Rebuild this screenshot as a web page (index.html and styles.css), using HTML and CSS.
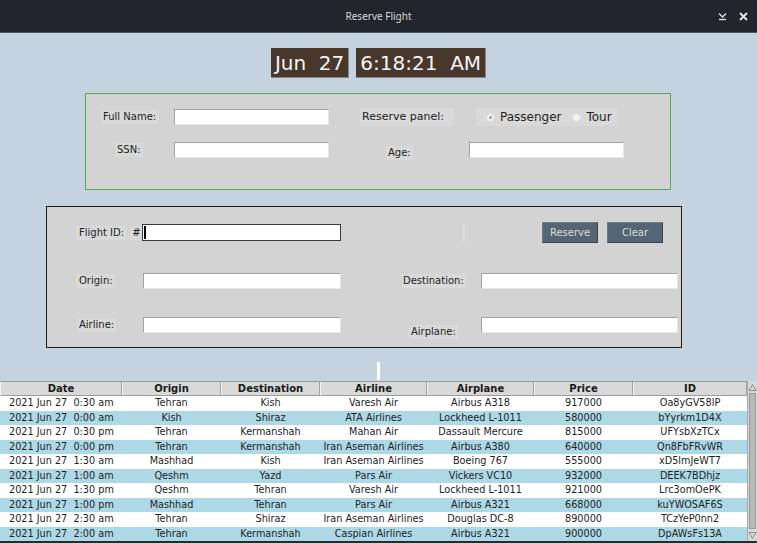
FILE: index.html
```html
<!DOCTYPE html>
<html>
<head>
<meta charset="utf-8">
<title>Reserve Flight</title>
<link rel="stylesheet" href="styles.css">
</head>
<body>
<div class="window">
  <div class="titlebar">
    <span class="title">Reserve Flight</span>
    <div class="wm-buttons">
      <svg class="wm-icon" width="9" height="9" viewBox="0 0 9 9"><path d="M1 1.5 L4.5 5 L8 1.5" fill="none" stroke="#e0e0e0" stroke-width="1.4"/><path d="M1 7.5 H8" stroke="#e0e0e0" stroke-width="1.4"/></svg>
      <svg class="wm-icon" width="9" height="9" viewBox="0 0 9 9"><path d="M1 1 L8 8 M8 1 L1 8" stroke="#e8e8e8" stroke-width="1.8"/></svg>
    </div>
  </div>

  <div class="clock">
    <div class="clock-box">Jun  27</div>
    <div class="clock-box">6:18:21  AM</div>
  </div>

  <div class="panel person">
    <div class="prow r1">
      <div class="cell c-name"><span class="lbl l-full">Full Name:</span></div>
      <div class="entry e-155"></div>
      <span class="lbl big l-reserve">Reserve panel:</span>
      <div class="radios">
        <span class="radio on"></span><span class="rtext">Passenger</span>
        <span class="radio"></span><span class="rtext">Tour</span>
      </div>
    </div>
    <div class="prow r2">
      <div class="cell c-name"><span class="lbl l-ssn">SSN:</span></div>
      <div class="entry e-155"></div>
      <div class="cell c-age"><span class="lbl l-age">Age:</span></div>
      <div class="entry e-155"></div>
    </div>
  </div>

  <div class="panel flight">
    <div class="frow f1">
      <div class="cell c-fid"><span class="lbl l-fid">Flight ID:</span><span class="lbl l-hash">#</span></div>
      <div class="entry focus e-199"><span class="caret"></span></div>
      <span class="ghost"></span>
      <button class="btn b-reserve">Reserve</button>
      <button class="btn b-clear">Clear</button>
    </div>
    <div class="frow f2">
      <div class="cell c-left"><span class="lbl">Origin:</span></div>
      <div class="entry e-198"></div>
      <div class="cell c-mid"><span class="lbl l-dest">Destination:</span></div>
      <div class="entry e-197"></div>
    </div>
    <div class="frow f3">
      <div class="cell c-left"><span class="lbl">Airline:</span></div>
      <div class="entry e-198"></div>
      <div class="cell c-mid"><span class="lbl l-plane">Airplane:</span></div>
      <div class="entry e-197"></div>
    </div>
  </div>

  <div class="marker"></div>

  <div class="tablewrap">
    <div class="grid">
      <div class="trow head">
        <div class="hc">Date</div><div class="hc">Origin</div><div class="hc">Destination</div><div class="hc">Airline</div><div class="hc">Airplane</div><div class="hc">Price</div><div class="hc">ID</div>
      </div>
      <div class="trow"><div class="dc">2021 Jun 27  0:30 am</div><div class="tc">Tehran</div><div class="tc">Kish</div><div class="tc">Varesh Air</div><div class="tc">Airbus A318</div><div class="tc">917000</div><div class="tc">Oa8yGV58lP</div></div>
      <div class="trow alt"><div class="dc">2021 Jun 27  0:00 am</div><div class="tc">Kish</div><div class="tc">Shiraz</div><div class="tc">ATA Airlines</div><div class="tc">Lockheed L-1011</div><div class="tc">580000</div><div class="tc">bYyrkm1D4X</div></div>
      <div class="trow"><div class="dc">2021 Jun 27  0:30 pm</div><div class="tc">Tehran</div><div class="tc">Kermanshah</div><div class="tc">Mahan Air</div><div class="tc">Dassault Mercure</div><div class="tc">815000</div><div class="tc">UFYsbXzTCx</div></div>
      <div class="trow alt"><div class="dc">2021 Jun 27  0:00 pm</div><div class="tc">Tehran</div><div class="tc">Kermanshah</div><div class="tc">Iran Aseman Airlines</div><div class="tc">Airbus A380</div><div class="tc">640000</div><div class="tc">Qn8FbFRvWR</div></div>
      <div class="trow"><div class="dc">2021 Jun 27  1:30 am</div><div class="tc">Mashhad</div><div class="tc">Kish</div><div class="tc">Iran Aseman Airlines</div><div class="tc">Boeing 767</div><div class="tc">555000</div><div class="tc">xD5lmJeWT7</div></div>
      <div class="trow alt"><div class="dc">2021 Jun 27  1:00 am</div><div class="tc">Qeshm</div><div class="tc">Yazd</div><div class="tc">Pars Air</div><div class="tc">Vickers VC10</div><div class="tc">932000</div><div class="tc">DEEK7BDhjz</div></div>
      <div class="trow"><div class="dc">2021 Jun 27  1:30 pm</div><div class="tc">Qeshm</div><div class="tc">Tehran</div><div class="tc">Varesh Air</div><div class="tc">Lockheed L-1011</div><div class="tc">921000</div><div class="tc">Lrc3omOePK</div></div>
      <div class="trow alt"><div class="dc">2021 Jun 27  1:00 pm</div><div class="tc">Mashhad</div><div class="tc">Tehran</div><div class="tc">Pars Air</div><div class="tc">Airbus A321</div><div class="tc">668000</div><div class="tc">kuYWOSAF6S</div></div>
      <div class="trow"><div class="dc">2021 Jun 27  2:30 am</div><div class="tc">Tehran</div><div class="tc">Shiraz</div><div class="tc">Iran Aseman Airlines</div><div class="tc">Douglas DC-8</div><div class="tc">890000</div><div class="tc">TCzYeP0nn2</div></div>
      <div class="trow alt"><div class="dc">2021 Jun 27  2:00 am</div><div class="tc">Tehran</div><div class="tc">Kermanshah</div><div class="tc">Caspian Airlines</div><div class="tc">Airbus A321</div><div class="tc">900000</div><div class="tc">DpAWsFs13A</div></div>
    </div>
    <div class="scrollbar">
      <div class="arrow"><svg width="9" height="9" viewBox="0 0 9 9"><path d="M1 7.5 L4.5 1.5 L8 7.5 Z" fill="#d9d9d9" stroke="#8a8a8a" stroke-width="1"/></svg></div>
      <div class="thumb"></div>
      <div class="arrow"><svg width="9" height="9" viewBox="0 0 9 9"><path d="M1 1.5 L4.5 7.5 L8 1.5 Z" fill="#d9d9d9" stroke="#8a8a8a" stroke-width="1"/></svg></div>
    </div>
  </div>
  <div class="bottomedge"></div>
</div>
</body>
</html>
```

FILE: styles.css
```css
* { box-sizing: border-box; }
html, body { margin: 0; padding: 0; }
body {
  width: 757px;
  height: 543px;
  overflow: hidden;
  background: #c5d3e0;
  font-family: "DejaVu Sans", sans-serif;
  font-size: 10px;
  color: #1e1e1e;
}
.window {
  width: 757px;
  height: 543px;
  display: flex;
  flex-direction: column;
  overflow: hidden;
}

/* title bar */
.titlebar {
  height: 33px;
  flex: none;
  background: #22252d;
  border-bottom: 1px solid #50535b;
  display: flex;
  align-items: center;
  justify-content: center;
  position: relative;
}
.title {
  font-family: "Noto Sans", "DejaVu Sans", sans-serif;
  font-size: 10px;
  color: #d8d8d8;
  margin-top: -1px;
}
.wm-buttons {
  position: absolute;
  right: 9px;
  top: 12px;
  display: flex;
  gap: 12px;
}
.wm-icon { display: block; }

/* clock */
.clock {
  margin-top: 15px;
  height: 30px;
  flex: none;
  display: flex;
  justify-content: center;
  gap: 7px;
}
.clock-box {
  height: 30px;
  padding: 0 4px;
  background: #47372c;
  color: #f4f4f4;
  font-size: 20px;
  line-height: 30px;
  white-space: pre;
  border-right: 1px solid #8a8580;
  border-bottom: 1px solid #8a8580;
}

/* panels */
.panel {
  flex: none;
  background: #d3d3d3;
}
.person {
  margin-top: 15px;
  margin-left: 85px;
  width: 586px;
  height: 97px;
  border: 1px solid #4cb34c;
  padding-top: 15px;
}
.flight {
  margin-top: 16px;
  margin-left: 46px;
  width: 636px;
  height: 142px;
  border: 1px solid #1b1b1b;
  padding-top: 15px;
}

.prow, .frow {
  display: flex;
  align-items: center;
}
.prow { height: 16px; }
.r2 { margin-top: 17px; }

.cell {
  flex: none;
  display: flex;
  align-items: center;
  height: 100%;
}
.c-name { width: 88px; }
.c-age { width: 140px; }
.c-fid { width: 95px; }
.c-left { width: 96px; }
.c-mid { width: 140px; }

.lbl {
  display: inline-block;
  background: #d9d9d9;
  padding: 1px 2px;
  line-height: 12px;
  white-space: nowrap;
  color: #222;
}
.l-full { margin-left: 15px; }
.l-ssn { margin-left: 29px; }
.l-age { margin-left: 57px; margin-top: 5px; }
.big {
  font-size: 11px;
  line-height: 16px;
}
.l-reserve {
  margin-left: 31px;
  width: 94px;
  padding: 1px 2px;
}
.radios {
  margin-left: 22px;
  width: 141px;
  height: 18px;
  background: #d9d9d9;
  display: flex;
  align-items: center;
  padding-left: 10px;
  font-size: 12px;
  color: #1e1e1e;
}
.radio {
  width: 9px;
  height: 9px;
  border-radius: 50%;
  background: #f2f2f2;
  border: 1px solid #dcdcdc;
  flex: none;
  position: relative;
}
.radio.on::after {
  content: "";
  position: absolute;
  left: 2px;
  top: 2px;
  width: 3px;
  height: 3px;
  border-radius: 50%;
  background: #9a9a9a;
}
.radio + .rtext { margin-left: 5px; }
.rtext + .radio { margin-left: 11px; }

.entry {
  flex: none;
  height: 16px;
  background: #fff;
  border: 1px solid;
  border-color: #a2a2a2 #e6e6e6 #e6e6e6 #a2a2a2;
}
.e-155 { width: 155px; }
.e-199 { width: 199px; height: 17px; }
.e-198 { width: 198px; }
.e-197 { width: 197px; }
.entry.focus {
  border: 1px solid #3a3a3a;
  padding: 1px 0 0 1px;
}
.caret {
  display: block;
  width: 2px;
  height: 13px;
  background: #000;
}

/* flight panel rows */
.f1 { height: 21px; }
.f2 { height: 16px; margin-top: 30px; }
.f3 { height: 16px; margin-top: 28px; }
.l-fid { margin-left: 29px; width: 51px; padding-left: 3px; }
.l-hash { margin-left: 4px; padding: 1px 2px; }
.f2 .c-left .lbl, .f3 .c-left .lbl { margin-left: 30px; padding-left: 2px; }
.l-dest { margin-left: 61px; padding-left: 1px; }
.l-plane { margin-left: 68px; margin-top: 14px; padding: 1px 2px; }
.ghost {
  flex: none;
  width: 3px;
  height: 17px;
  margin-left: 121px;
  background: #dcdcdc;
}
.btn {
  flex: none;
  width: 56px;
  height: 21px;
  padding: 0;
  font-family: "DejaVu Sans", sans-serif;
  font-size: 10px;
  color: #dcdcdc;
  background: #556573;
  border: 1px solid;
  border-color: #6e7b87 #38434d #38434d #6e7b87;
}
.b-reserve { margin-left: 77px; }
.b-clear { margin-left: 9px; }

/* marker */
.marker {
  flex: none;
  margin-top: 14px;
  margin-left: 377px;
  width: 3px;
  height: 18px;
  background: #fff;
}

/* table */
.tablewrap {
  flex: none;
  margin-top: 1px;
  display: flex;
  height: 160px;
  overflow: hidden;
}
.grid {
  width: 747px;
  flex: none;
  background: #fff;
}
.trow {
  display: grid;
  grid-template-columns: 122px 99px 99px 107px 107px 99px 114px;
  height: 14.5px;
  background: #fff;
}
.trow.alt { background: #add8e6; }
.trow.head {
  height: 15px;
  background: #d9d9d9;
  border-top: 1px solid #9c9c9c;
}
.hc {
  font-weight: bold;
  font-size: 10px;
  text-align: center;
  line-height: 13px;
  color: #1a1a1a;
  border-left: 1px solid #f2f2f2;
  border-right: 1px solid #a4a4a4;
  border-bottom: 1px solid #9c9c9c;
  overflow: hidden;
  white-space: nowrap;
}
.dc, .tc {
  font-size: 9.7px;
  line-height: 13px;
  white-space: pre;
  overflow: hidden;
  color: #1e1e1e;
}
.dc { padding-left: 9px; }
.tc { text-align: center; }

.scrollbar {
  flex: none;
  width: 10px;
  background: #d9d9d9;
  border-left: 1px solid #a8a8a8;
  display: flex;
  flex-direction: column;
}
.arrow {
  height: 12px;
  flex: none;
  display: flex;
  align-items: center;
  justify-content: center;
}
.thumb {
  flex: 1;
  margin: 0 1px;
  background: #b9b9b9;
  border: 1px solid #9c9c9c;
}
.bottomedge {
  flex: none;
  height: 3px;
  background: #2a2a2a;
}
```
